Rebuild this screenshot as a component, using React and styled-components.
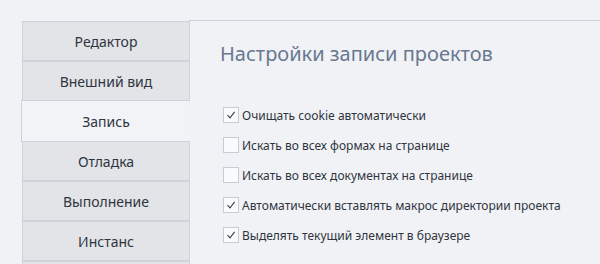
import React from 'react'
import styled, { createGlobalStyle } from 'styled-components'

const GlobalStyle = createGlobalStyle`
  html, body {
    margin: 0;
    background: #f0f2f6;
    font-family: "Noto Sans", "Liberation Sans", sans-serif;
  }
`

const Page = styled.div`
  display: flex;
  width: 600px;
  height: 264px;
  padding: 20px 0 0 21px;
  box-sizing: border-box;
  overflow: hidden;
`

const Sidebar = styled.div`
  width: 168px;
  flex-shrink: 0;
  padding-top: 1px;
  display: flex;
  flex-direction: column;
`

const Tab = styled.div`
  position: relative;
  box-sizing: border-box;
  height: ${p => (p.$active ? '42px' : '40px')};
  margin: ${p => (p.$active ? '-1px -1px -1px 0' : '0 -1px 0 1px')};
  border: 1px solid #cfd2d9;
  border-right: ${p => (p.$active ? 'none' : '1px solid #cfd2d9')};
  background: ${p => (p.$active ? '#f2f3f7' : '#e3e4e8')};
  z-index: ${p => (p.$active ? 1 : 0)};
  display: flex;
  align-items: center;
  justify-content: center;
  font-size: 14px;
  color: #2f3540;
  flex-shrink: 0;
`

const Panel = styled.div`
  flex: 1;
  border-top: 1px solid #cfd2d9;
  border-left: 1px solid #cfd2d9;
  background: #f1f2f6;
  padding: 19px 0 0 30px;
`

const Title = styled.h1`
  margin: 0 0 32px;
  font-weight: 400;
  font-size: 20px;
  line-height: 28px;
  color: #687890;
`

const Options = styled.div`
  display: flex;
  flex-direction: column;
  padding-left: 3px;
`

const Row = styled.label`
  display: flex;
  align-items: center;
  height: 30px;
  gap: 3px;
  font-size: 12px;
  color: #2f3540;
`

const Box = styled.span`
  width: 16px;
  height: 16px;
  box-sizing: border-box;
  border: 1px solid #c9ccd4;
  background: #fafbfc;
  display: flex;
  align-items: center;
  justify-content: center;
  flex-shrink: 0;
`

const Check = () => (
  <svg width="10" height="10" viewBox="0 0 10 10">
    <path d="M1.5 5.2 L4 7.8 L8.6 1.8" fill="none" stroke="#3a404a" strokeWidth="1.1" />
  </svg>
)

const tabs = ['Редактор', 'Внешний вид', 'Запись', 'Отладка', 'Выполнение', 'Инстанс', '']

const options = [
  { text: 'Очищать cookie автоматически', checked: true },
  { text: 'Искать во всех формах на странице', checked: false },
  { text: 'Искать во всех документах на странице', checked: false },
  { text: 'Автоматически вставлять макрос директории проекта', checked: true },
  { text: 'Выделять текущий элемент в браузере', checked: true },
]

export default function App() {
  return (
    <>
      <GlobalStyle />
      <Page>
        <Sidebar>
          {tabs.map((t, i) => (
            <Tab key={i} $active={t === 'Запись'}>{t}</Tab>
          ))}
        </Sidebar>
        <Panel>
          <Title>Настройки записи проектов</Title>
          <Options>
            {options.map(o => (
              <Row key={o.text}>
                <Box>{o.checked && <Check />}</Box>
                {o.text}
              </Row>
            ))}
          </Options>
        </Panel>
      </Page>
    </>
  )
}
